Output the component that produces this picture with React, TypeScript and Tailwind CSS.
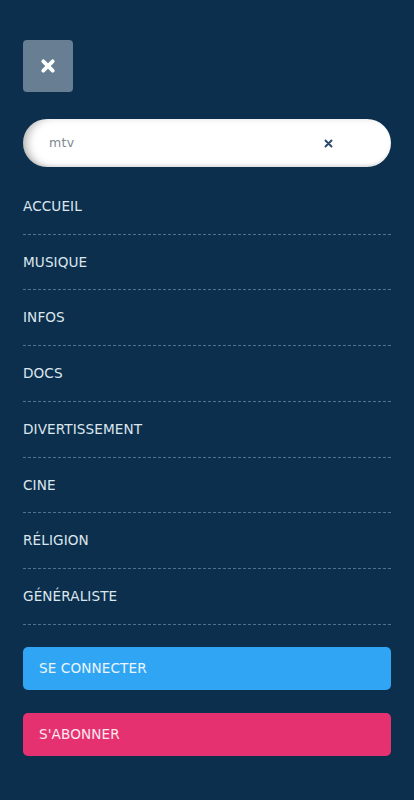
const items = ["ACCUEIL", "MUSIQUE", "INFOS", "DOCS", "DIVERTISSEMENT", "CINE", "RÉLIGION", "GÉNÉRALISTE"];

const XIcon = ({ className, strokeWidth }: { className: string; strokeWidth: number }) => (
	<svg viewBox="0 0 12 12" className={className} fill="none" stroke="currentColor" strokeWidth={strokeWidth} strokeLinecap="round">
		<path d="M2 2 L10 10 M10 2 L2 10" />
	</svg>
);

const App = () => {
	return (
		<div className="min-h-[800px] w-full bg-[#0b2f4c] px-[23px] pt-[40px] pb-[44px]" style={{ fontFamily: '"DejaVu Sans", "Noto Sans", sans-serif' }}>
			<button className="flex items-center justify-center w-[50px] h-[52px] rounded-[4px] bg-[#687f93] text-white">
				<XIcon className="w-[14px] h-[14px]" strokeWidth={3.2} />
			</button>

			<div className="mt-[27px] flex items-center h-[48px] rounded-full bg-white pl-[26px] pr-[58px] shadow-[inset_7px_0_8px_-3px_rgba(0,0,0,0.28),inset_0_-2px_3px_rgba(0,0,0,0.08)]">
				<span className="flex-1 text-[12.5px] text-[#7d8892] tracking-[0.3px]">mtv</span>
				<XIcon className="w-[9px] h-[9px] text-[#2d4a70]" strokeWidth={2.6} />
			</div>

			<nav className="mt-[12px] flex flex-col">
				{items.map((item) => (
					<a
						key={item}
						href="#"
						className="block py-[20px] leading-[14.7px] text-[13.6px] tracking-[0.1px] text-[#dde6ee] border-b border-dashed border-[#4f7290]">
						{item}
					</a>
				))}
			</nav>

			<div className="mt-[22px] flex flex-col gap-[23px]">
				<button className="h-[43px] w-full rounded-[5px] bg-[#2fa5f4] px-[16px] text-left text-[13.6px] tracking-[0.1px] text-[#eaf5fd]">
					SE CONNECTER
				</button>
				<button className="h-[43px] w-full rounded-[5px] bg-[#e63171] px-[16px] text-left text-[13.6px] tracking-[0.1px] text-[#fce8ef]">
					S'ABONNER
				</button>
			</div>
		</div>
	);
};
export default App;
